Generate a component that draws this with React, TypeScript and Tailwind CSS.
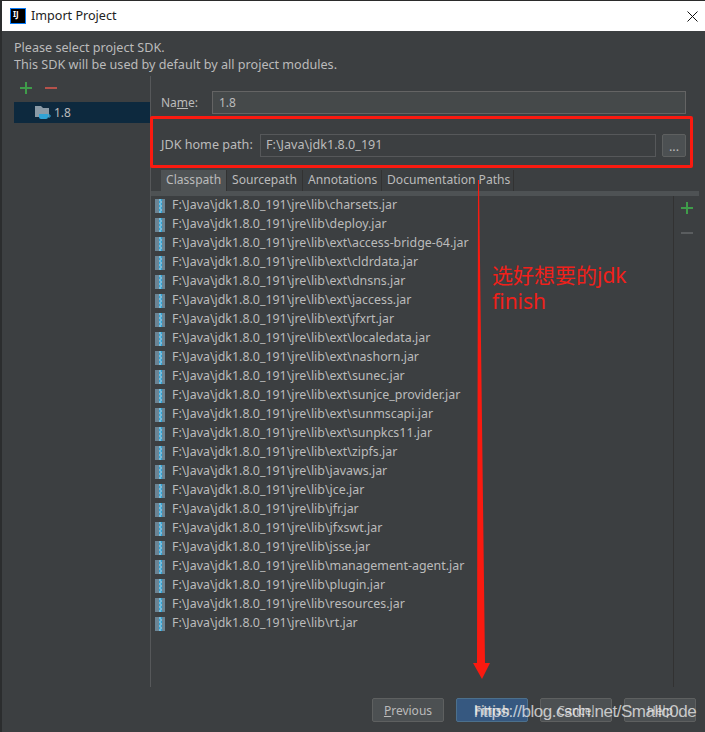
const FONT = "font-['Noto_Sans','Noto_Sans_CJK_SC',sans-serif]";

const JARS = [
  "charsets.jar",
  "deploy.jar",
  "ext\\access-bridge-64.jar",
  "ext\\cldrdata.jar",
  "ext\\dnsns.jar",
  "ext\\jaccess.jar",
  "ext\\jfxrt.jar",
  "ext\\localedata.jar",
  "ext\\nashorn.jar",
  "ext\\sunec.jar",
  "ext\\sunjce_provider.jar",
  "ext\\sunmscapi.jar",
  "ext\\sunpkcs11.jar",
  "ext\\zipfs.jar",
  "javaws.jar",
  "jce.jar",
  "jfr.jar",
  "jfxswt.jar",
  "jsse.jar",
  "management-agent.jar",
  "plugin.jar",
  "resources.jar",
  "rt.jar",
];

function JarIcon() {
  return (
    <svg width="10" height="14" viewBox="0 0 10 14" className="shrink-0">
      <rect width="10" height="14" fill="#6b8494" />
      <rect x="4" width="3" height="14" fill="#2fa3d6" />
      <path d="M4 1h2M5 3h2M4 5h2M5 7h2M4 9h2M5 11h2M4 13h2" stroke="#bcd6e4" strokeWidth="1" />
    </svg>
  );
}

function FolderIcon() {
  return (
    <svg width="16" height="15" viewBox="0 0 16 15" className="shrink-0">
      <path d="M0 1h6l2 2h6v9H0z" fill="#8a9aa6" />
      <path d="M4 9h9v3a2 2 0 0 1-2 2H6a2 2 0 0 1-2-2z" fill="#2fa3d6" />
      <path d="M13 10h2v2h-2" fill="none" stroke="#2fa3d6" strokeWidth="1" />
    </svg>
  );
}

function Btn({ label, primary }: { label: React.ReactNode; primary?: boolean }) {
  return (
    <div
      className={`w-[72px] h-[24px] flex items-center justify-center pt-[1px] rounded-[2px] border text-[12px] ${
        primary ? "bg-[#365880] border-[#4c708c] text-[#bbbbbb] font-bold" : "bg-[#4c5052] border-[#5e6060] text-[#bbbbbb]"
      }`}
    >
      {label}
    </div>
  );
}

export default function App() {
  return (
    <div className={`relative w-[705px] h-[732px] overflow-hidden bg-[#2b2d2e] pl-[2px] ${FONT}`}>
      <div className="h-full flex flex-col bg-[#3c3f41]">
        {/* Title bar */}
        <div className="h-[31px] shrink-0 bg-white border-t border-[#2b2b2b] flex items-center pl-[8px] pr-[7px]">
          <div className="w-[16px] h-[16px] shrink-0 bg-black border border-[#087cfa] text-white text-[8px] font-bold leading-[9px] pl-[2px]">
            IJ
          </div>
          <span className="ml-[5px] text-[12.6px] text-[#222222]">Import Project</span>
          <svg width="11" height="11" viewBox="0 0 11 11" className="ml-auto">
            <path d="M0.5 0.5l10 10M10.5 0.5l-10 10" stroke="#111" strokeWidth="1" />
          </svg>
        </div>

        {/* Description */}
        <div className="shrink-0 pt-[8px] pl-[12px] text-[12.6px] leading-[17px] text-[#bbbbbb]">
          <p>Please select project SDK.</p>
          <p>This SDK will be used by default by all project modules.</p>
        </div>

        {/* Main */}
        <div className="flex h-[611px] mt-[3px] shrink-0">
          <div className="w-[148px] shrink-0 pt-[4px]">
            <div className="flex items-center gap-[11px] pl-[17px] h-[16px]">
              <svg width="14" height="14" viewBox="0 0 14 14">
                <path d="M7 1v12M1 7h12" stroke="#3f9c4a" strokeWidth="2" />
              </svg>
              <svg width="14" height="14" viewBox="0 0 14 14">
                <path d="M1 7h12" stroke="#b5524b" strokeWidth="2" />
              </svg>
            </div>
            <div className="mt-[6px] ml-[12px] h-[21px] bg-[#0d293e] flex items-center pl-[21px] gap-[3px] text-[12px] text-[#bbbbbb]">
              <FolderIcon />
              <span>1.8</span>
            </div>
          </div>

          <div className="flex-1 border-l border-[#56585a] flex flex-col">
            <div className="flex items-center h-[23px] mt-[15px] pl-[10px] pr-[19px] text-[12px] text-[#bbbbbb]">
              <span className="w-[51px]">
                Na<span className="underline">m</span>e:
              </span>
              <div className="flex-1 h-[23px] bg-[#45494a] border border-[#646464] flex items-center pl-[6px]">1.8</div>
            </div>

            <div className="flex items-center h-[23px] mt-[20px] pl-[10px] pr-[19px] text-[12.6px] text-[#bbbbbb]">
              <span className="w-[99px]">JDK home path:</span>
              <div className="flex-1 h-[23px] bg-[#3c3f41] border border-[#56585a] flex items-center pl-[5px]">
                F:\Java\jdk1.8.0_191
              </div>
              <div className="ml-[6px] w-[24px] h-[23px] bg-[#4c5052] border border-[#5e6060] rounded-[2px] flex items-center justify-center pt-[3px] leading-none">
                ...
              </div>
            </div>

            <div className="flex h-[21px] mt-[13px] pl-[10px] text-[12.1px] text-[#bbbbbb]">
              <div className="w-[66px] pl-[5px] flex items-center border-r border-[#323232] whitespace-nowrap bg-[#4e5254]">Classpath</div>
              <div className="w-[76px] pl-[5px] flex items-center border-r border-[#323232] whitespace-nowrap">Sourcepath</div>
              <div className="w-[79px] pl-[5px] flex items-center border-r border-[#323232] whitespace-nowrap">Annotations</div>
              <div className="w-[132px] pl-[5px] flex items-center border-r border-[#323232] whitespace-nowrap">Documentation Paths</div>
            </div>
            <div className="h-[5px] w-[548px] shrink-0 bg-[#4e5254]" />

            <div className="flex flex-1 w-[548px]">
              <div className="flex-1 border-r border-[#323232] pl-[4px]">
                {JARS.map((j) => (
                  <div key={j} className="h-[19px] flex items-center gap-[7px] text-[12.4px] text-[#bbbbbb] whitespace-nowrap">
                    <JarIcon />
                    <span>F:\Java\jdk1.8.0_191\jre\lib\{j}</span>
                  </div>
                ))}
              </div>
              <div className="w-[25px] shrink-0 flex flex-col items-center pt-[5px] gap-[11px]">
                <svg width="14" height="14" viewBox="0 0 14 14">
                  <path d="M7 1v12M1 7h12" stroke="#3f9c4a" strokeWidth="2" />
                </svg>
                <svg width="14" height="14" viewBox="0 0 14 14">
                  <path d="M1 7h12" stroke="#5a5d5f" strokeWidth="2" />
                </svg>
              </div>
            </div>
          </div>
        </div>

        {/* Footer */}
        <div className="flex justify-end gap-[12px] pr-[9px] mt-[11px]">
          <Btn label={<><span className="underline">P</span>revious</>} />
          <Btn primary label="Finish" />
          <Btn label="Cancel" />
          <Btn label="Help" />
        </div>
      </div>

      {/* Red annotations drawn over the screenshot */}
      <div className="absolute left-[150px] top-[116px] w-[543px] h-[52px] border-[3px] border-[#fa1a10] rounded-[2px]" />
      <svg width="705" height="732" viewBox="0 0 705 732" className="absolute left-0 top-0 pointer-events-none">
        <polygon points="478,180 479,180 485,663 490,663 482,679 473,663 477,663" fill="#fa1a10" />
      </svg>
      <div className="absolute left-[492px] top-[262px] text-[21px] leading-[26px] text-[#f0201a] whitespace-nowrap">
        <p>选好想要的jdk</p>
        <p>finish</p>
      </div>

      {/* Watermark */}
      <div className="absolute left-[474px] top-[702px] text-[17px] leading-[20px] tracking-[-0.45px] text-[#ffffff]/70 whitespace-nowrap font-['Liberation_Sans',sans-serif]">
        https://blog.csdn.net/Smallc0de
      </div>
    </div>
  );
}
